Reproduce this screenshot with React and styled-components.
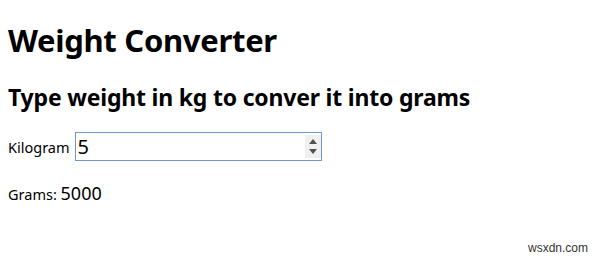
import React, { useState } from 'react'
import styled, { createGlobalStyle } from 'styled-components'

const GlobalStyle = createGlobalStyle`
  html, body {
    margin: 0;
    padding: 0;
    background: #fff;
  }
  body {
    font-family: "Noto Sans", "Open Sans", sans-serif;
    color: #000;
  }
`

const Page = styled.div`
  position: relative;
  width: 600px;
  height: 265px;
  padding: 0 8px;
  box-sizing: border-box;
`

const Title = styled.h1`
  margin: 0;
  padding-top: 20px;
  font-size: 31px;
  line-height: 40px;
  font-weight: 700;
  letter-spacing: -0.3px;
`

const Subtitle = styled.h2`
  margin: 22px 0 0;
  font-size: 23px;
  line-height: 30px;
  font-weight: 700;
  letter-spacing: -0.2px;
`

const Row = styled.div`
  display: flex;
  align-items: center;
  margin-top: 20px;
  gap: 5px;
`

const Label = styled.label`
  font-size: 14.5px;
`

const Field = styled.div`
  position: relative;
  width: 247px;
  height: 29px;
`

const NumberInput = styled.input`
  width: 100%;
  height: 100%;
  box-sizing: border-box;
  border: 1px solid #7396d0;
  border-radius: 0;
  padding: 0 2px;
  font-family: "Noto Sans", sans-serif;
  font-size: 20px;
  outline: none;
  color: #000;
  caret-color: #000;
  -moz-appearance: textfield;

  &::-webkit-inner-spin-button,
  &::-webkit-outer-spin-button {
    -webkit-appearance: none;
    margin: 0;
  }
`

const Spinner = styled.div`
  position: absolute;
  top: 3px;
  right: 1px;
  bottom: 3px;
  width: 16px;
  background: #f0f0f0;
  display: flex;
  flex-direction: column;
  align-items: center;
  justify-content: center;
  gap: 5px;
  pointer-events: none;
`

const Value = styled.span`
  font-size: 18px;
`

const Result = styled.p`
  margin: 20px 0 0;
  font-size: 14.5px;
`

const Watermark = styled.span`
  position: absolute;
  right: 12px;
  bottom: 10px;
  font-family: "Liberation Sans", Arial, sans-serif;
  font-size: 12px;
  color: #333;
`

const Arrow = ({ down }) => (
  <svg width="8" height="5" viewBox="0 0 8 5">
    <path d={down ? 'M0 0 L8 0 L4 5 Z' : 'M4 0 L8 5 L0 5 Z'} fill="#505050" />
  </svg>
)

export default function App() {
  const [kg, setKg] = useState('5')
  const grams = kg === '' ? '' : Number(kg) * 1000

  return (
    <>
      <GlobalStyle />
      <Page>
        <Title>Weight Converter</Title>
        <Subtitle>Type weight in kg to conver it into grams</Subtitle>
        <Row>
          <Label htmlFor="kg">Kilogram</Label>
          <Field>
            <NumberInput
              id="kg"
              type="number"
              autoFocus
              value={kg}
              onChange={e => setKg(e.target.value)}
            />
            <Spinner>
              <Arrow />
              <Arrow down />
            </Spinner>
          </Field>
        </Row>
        <Result>
          Grams: <Value>{grams}</Value>
        </Result>
        <Watermark>wsxdn.com</Watermark>
      </Page>
    </>
  )
}
